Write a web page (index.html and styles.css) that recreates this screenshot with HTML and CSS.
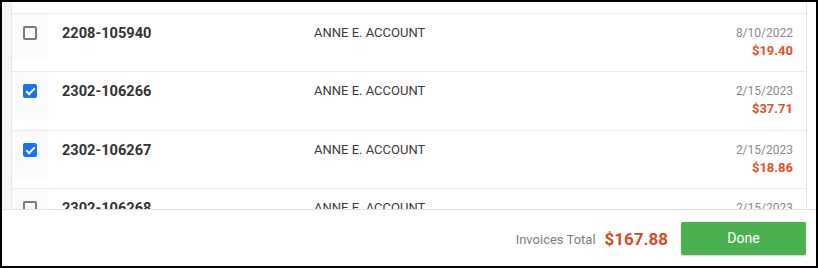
FILE: index.html
```html
<!DOCTYPE html>
<html lang="en">
<head>
  <meta charset="UTF-8" />
  <meta name="viewport" content="width=device-width, initial-scale=1.0" />
  <title>Select Invoices</title>
  <link rel="stylesheet" href="styles.css">
</head>
<body>
  <div class="frame">
    <div class="list-wrap">
      <div class="gutter-left"></div>
      <div class="list">
        <div class="row">
          <div class="check-cell"><span class="checkbox"></span></div>
          <div class="inv-id">2208-105940</div>
          <div class="inv-name">ANNE E. ACCOUNT</div>
          <div class="inv-meta">
            <div class="inv-date">8/10/2022</div>
            <div class="inv-amount">$19.40</div>
          </div>
        </div>
        <div class="row">
          <div class="check-cell"><span class="checkbox checked"></span></div>
          <div class="inv-id">2302-106266</div>
          <div class="inv-name">ANNE E. ACCOUNT</div>
          <div class="inv-meta">
            <div class="inv-date">2/15/2023</div>
            <div class="inv-amount">$37.71</div>
          </div>
        </div>
        <div class="row">
          <div class="check-cell"><span class="checkbox checked"></span></div>
          <div class="inv-id">2302-106267</div>
          <div class="inv-name">ANNE E. ACCOUNT</div>
          <div class="inv-meta">
            <div class="inv-date">2/15/2023</div>
            <div class="inv-amount">$18.86</div>
          </div>
        </div>
        <div class="row">
          <div class="check-cell"><span class="checkbox"></span></div>
          <div class="inv-id">2302-106268</div>
          <div class="inv-name">ANNE E. ACCOUNT</div>
          <div class="inv-meta">
            <div class="inv-date">2/15/2023</div>
            <div class="inv-amount">$22.10</div>
          </div>
        </div>
      </div>
      <div class="gutter-right"></div>
    </div>

    <div class="footer">
      <span class="total-label">Invoices Total</span>
      <span class="total-value">$167.88</span>
      <button class="done-btn">Done</button>
    </div>
  </div>
</body>
</html>
```

FILE: styles.css
```css
/* Base */
* {
  box-sizing: border-box;
}
body {
  margin: 0;
  font-family: Roboto, 'Liberation Sans', sans-serif;
  color: #333;
  background: #fff;
}
.frame {
  width: 818px;
  height: 268px;
  border: 2px solid #000;
  display: flex;
  flex-direction: column;
  overflow: hidden;
}

/* Invoice list */
.list-wrap {
  flex: 1;
  display: flex;
  min-height: 0;
  overflow: hidden;
}
.gutter-left {
  width: 10px;
  background: #f5f5f5;
  border-right: 1px solid #e8e8e8;
}
.gutter-right {
  width: 10px;
  border-left: 1px solid #e6e6e6;
}
.list {
  flex: 1;
  padding-top: 11px;
}
.row {
  height: 58.4px;
  border-top: 1px solid #ececec;
  display: flex;
  align-items: flex-start;
  padding-top: 10px;
  padding-right: 13px;
}
.check-cell {
  width: 37px;
  height: 100%;
  margin-top: -10px;
  padding-top: 12px;
  padding-left: 11px;
  background: #fbfbfb;
}
.checkbox {
  display: block;
  width: 14px;
  height: 14px;
  border: 2px solid #7a7a7a;
  border-radius: 2px;
  position: relative;
}
.checkbox.checked {
  background: #1a73e8;
  border-color: #1a73e8;
}
.checkbox.checked:after {
  content: '';
  position: absolute;
  left: 3px;
  top: 0px;
  width: 3px;
  height: 7px;
  border: solid #fff;
  border-width: 0 2px 2px 0;
  transform: rotate(45deg);
}
.inv-id {
  width: 265px;
  padding-left: 13px;
  font-size: 14.6px;
  line-height: 18px;
  font-weight: 700;
  color: #333;
}
.inv-name {
  flex: 1;
  font-size: 13px;
  line-height: 18px;
  color: #3a3a3a;
}
.inv-meta {
  text-align: right;
}
.inv-date {
  font-size: 12px;
  line-height: 18px;
  color: #8a8a8a;
}
.inv-amount {
  font-size: 13px;
  line-height: 18px;
  font-weight: 700;
  color: #e0542b;
}

/* Footer */
.footer {
  height: 57px;
  border-top: 1px solid #e2e2e2;
  display: flex;
  align-items: center;
  justify-content: flex-end;
  padding-right: 10px;
}
.total-label {
  font-size: 13px;
  color: #7d7d7d;
  margin-right: 9px;
  margin-top: 3px;
}
.total-value {
  font-size: 17px;
  font-weight: 700;
  color: #d84a1f;
  margin-right: 13px;
  margin-top: 2px;
}
.done-btn {
  width: 125px;
  height: 33px;
  background: #4caf50;
  color: #fff;
  border: none;
  border-radius: 2px;
  box-shadow: 0 1px 2px rgba(0,0,0,0.2);
  font-family: inherit;
  font-size: 14px;
  cursor: pointer;
}
```
